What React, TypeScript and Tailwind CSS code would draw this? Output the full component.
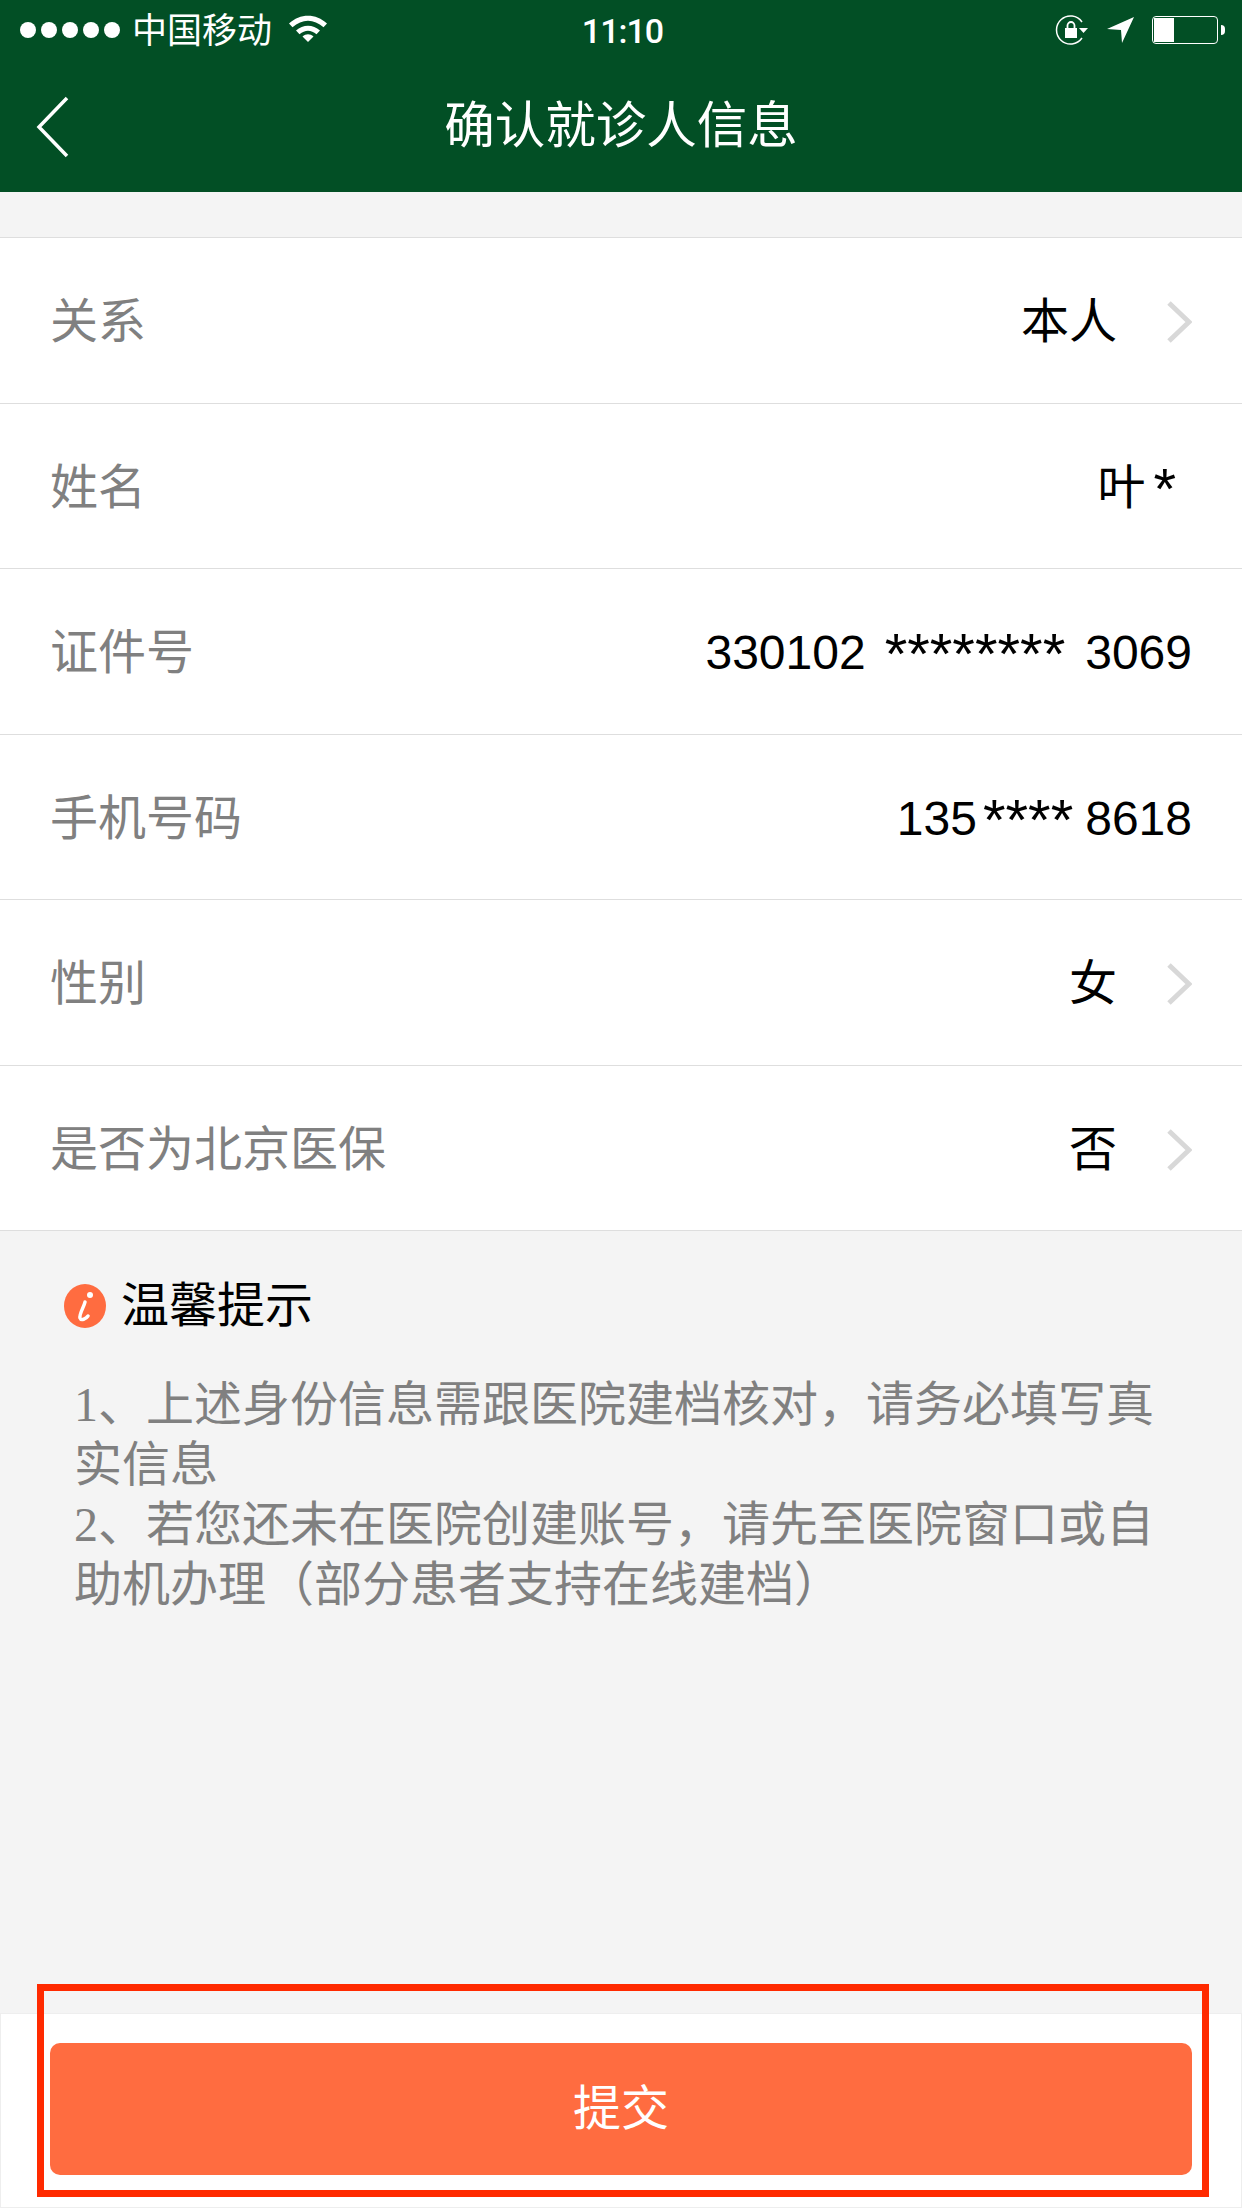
const SANS = '"Liberation Sans", "Noto Sans CJK SC", sans-serif';

function Chevron() {
  return (
    <svg width="26" height="44" viewBox="0 0 26 44" className="ml-[49px] shrink-0">
      <path d="M3 3l20 19L3 41" fill="none" stroke="#d8d8d8" strokeWidth="5" />
    </svg>
  );
}

function Stars({ count, className }: { count: number; className?: string }) {
  return <span className={`text-[58px] leading-none relative top-[1px] ${className ?? ''}`}>{'*'.repeat(count)}</span>;
}

const rows = [
  { label: '关系', value: <span>本人</span>, arrow: true },
  {
    label: '姓名',
    value: (
      <span className="flex items-center mr-[16px]">
        叶
        <Stars count={1} className="ml-[8px]" />
      </span>
    ),
  },
  {
    label: '证件号',
    value: (
      <span className="flex items-center">
        330102
        <Stars count={8} className="ml-[19px] mr-[20px]" />
        3069
      </span>
    ),
  },
  {
    label: '手机号码',
    value: (
      <span className="flex items-center">
        135
        <Stars count={4} className="ml-[6px] mr-[12px]" />
        8618
      </span>
    ),
  },
  { label: '性别', value: <span>女</span>, arrow: true },
  { label: '是否为北京医保', value: <span>否</span>, arrow: true },
];

function StatusBar() {
  return (
    <div className="h-[60px] grid grid-cols-[1fr_auto_1fr] items-center pl-[20px] pr-[17px] text-white">
      <div className="flex items-center">
        <div className="flex gap-[5px]">
          {[0, 1, 2, 3, 4].map((i) => (
            <span key={i} className="w-[16px] h-[16px] rounded-full bg-white" />
          ))}
        </div>
        <span className="ml-[12px] text-[35px] leading-none">中国移动</span>
        <svg width="38" height="27" viewBox="0 0 38 27" className="ml-[17px] mb-[4px]">
          <path d="M0 8.500C11-2 27-2 38 8.500l-3.500 3.700C25 3.500 13 3.500 3.500 12.200z" fill="white" />
          <path d="M7 15.500C14 9 24 9 31 15.500l-3.500 3.700C22 14.500 16 14.500 10.500 19.200z" fill="white" />
          <path d="M13.500 21.500C17 18.500 21 18.500 24.500 21.500L19 27z" fill="white" />
        </svg>
      </div>
      <span
        className="text-[34px] leading-none font-medium tracking-[-1px] pt-[2px]"
        style={{ fontFamily: 'Roboto, sans-serif' }}
      >
        11:10
      </span>
      <div className="flex items-center justify-end">
        <svg width="33" height="30" viewBox="0 0 33 30" className="mr-[19px]">
          <path d="M27 7A14 14 0 1 0 27 23" fill="none" stroke="white" strokeWidth="1.500" />
          <path d="M24 13h9l-4.500 5z" fill="white" />
          <rect x="10" y="13" width="12" height="10" fill="white" />
          <path d="M12.500 13v-2.500a3.500 3.500 0 0 1 7 0v2.500" fill="none" stroke="white" strokeWidth="1.800" />
        </svg>
        <svg width="27" height="26" viewBox="0 0 27 26" className="mr-[18px]">
          <path d="M27 0L15 26l-1-13L0 12z" fill="white" />
        </svg>
        <div className="w-[66px] h-[28px] border border-white rounded-[4px] p-[1px]">
          <div className="w-[20px] h-full bg-white" />
        </div>
        <div className="w-[4px] h-[10px] bg-white rounded-r-full ml-[3px]" />
      </div>
    </div>
  );
}

export default function App() {
  return (
    <div className="relative w-[1242px] h-[2208px] flex flex-col bg-[#f4f4f4]" style={{ fontFamily: SANS }}>
      <header className="bg-[#024f25] h-[192px] shrink-0">
        <StatusBar />
        <div className="relative h-[132px] flex items-center justify-center">
          <svg width="36" height="62" viewBox="0 0 36 62" className="absolute left-[35px] top-[36px]">
            <path d="M32 2L4 31l28 29" fill="none" stroke="white" strokeWidth="3.500" />
          </svg>
          <h1 className="text-white text-[50.500px] leading-none font-normal">确认就诊人信息</h1>
        </div>
      </header>

      <main className="flex-1 pt-[45px]">
        <div className="bg-white border-t border-[#dedede]">
          {rows.map((row) => (
            <div
              key={row.label}
              className="h-[165.500px] border-b border-[#dedede] flex items-center justify-between pl-[50px] pr-[50px] pt-[4px]"
            >
              <span className="text-[48px] text-[#808080]">{row.label}</span>
              <div className="flex items-center text-[48px] text-black">
                {row.value}
                {row.arrow && <Chevron />}
              </div>
            </div>
          ))}
        </div>

        <div className="pt-[50px] pl-[64px] pr-[70px]">
          <div className="flex items-center">
            <svg width="42" height="44" viewBox="0 0 42 44" className="shrink-0">
              <ellipse cx="21" cy="22" rx="21" ry="22" fill="#ff6c40" />
              <circle cx="26" cy="11" r="3" fill="white" />
              <path d="M21 18c-1 5-6 12-5 16 1 3 6 1 8-2" fill="none" stroke="white" strokeWidth="3.500" strokeLinecap="round" />
            </svg>
            <span className="ml-[15px] text-[48px] leading-[50px] text-black">温馨提示</span>
          </div>
          <p
            className="mt-[44px] ml-[10px] text-[48px] leading-[60px] text-[#808080]"
            style={{ fontFamily: '"Liberation Serif", "Noto Sans CJK SC", serif' }}
          >
            1、上述身份信息需跟医院建档核对，请务必填写真实信息
            <br />
            2、若您还未在医院创建账号，请先至医院窗口或自助机办理（部分患者支持在线建档）
          </p>
        </div>
      </main>

      <footer className="h-[195px] shrink-0 bg-white border border-[#eeeeee] pt-[29px] px-[49px]">
        <button className="w-full h-[132px] bg-[#ff6c40] rounded-[10px] text-white text-[48px]">提交</button>
      </footer>

      <div className="absolute left-[37px] top-[1984px] w-[1172px] h-[213px] border-[7px] border-[#ff2a00] pointer-events-none" />
    </div>
  );
}
